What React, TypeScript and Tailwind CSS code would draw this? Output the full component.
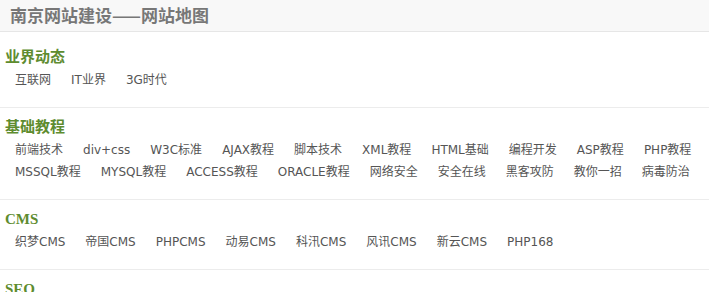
const sections: { title: string; links: string[] }[] = [
  { title: "业界动态", links: ["互联网", "IT业界", "3G时代"] },
  {
    title: "基础教程",
    links: [
      "前端技术",
      "div+css",
      "W3C标准",
      "AJAX教程",
      "脚本技术",
      "XML教程",
      "HTML基础",
      "编程开发",
      "ASP教程",
      "PHP教程",
      "MSSQL教程",
      "MYSQL教程",
      "ACCESS教程",
      "ORACLE教程",
      "网络安全",
      "安全在线",
      "黑客攻防",
      "教你一招",
      "病毒防治",
    ],
  },
  {
    title: "CMS",
    links: ["织梦CMS", "帝国CMS", "PHPCMS", "动易CMS", "科汛CMS", "风讯CMS", "新云CMS", "PHP168"],
  },
  { title: "SEO", links: [] },
];

function Section({ title, links }: { title: string; links: string[] }) {
  return (
    <section className="border-b border-[#ececec] pt-[9px] pb-[16px]">
      <h2 className="pl-[5px] text-[15px] leading-[20px] font-bold text-[#5e8c2f] font-['Liberation_Serif','Noto_Sans_CJK_SC',serif]">
        {title}
      </h2>
      {links.length > 0 && (
        <ul className="mt-[2px] flex flex-wrap gap-x-[20px] pl-[15px] text-[12px] leading-[22px] text-[#555] font-['DejaVu_Sans','Noto_Sans_CJK_SC',sans-serif]">
          {links.map((l) => (
            <li key={l}>
              <a href="#">{l}</a>
            </li>
          ))}
        </ul>
      )}
    </section>
  );
}

export default function App() {
  return (
    <div className="w-[709px] h-[292px] overflow-hidden bg-white">
      <div className="h-[32px] bg-[#f8f8f8] border-b border-[#e6e6e6] pl-[10px]">
        <h1 className="text-[17px] leading-[29px] font-bold text-[#777] font-['Noto_Sans_CJK_SC',sans-serif]">
          南京网站建设——网站地图
        </h1>
      </div>
      <div className="pt-[6px]">
        {sections.map((s) => (
          <Section key={s.title} title={s.title} links={s.links} />
        ))}
      </div>
    </div>
  );
}
